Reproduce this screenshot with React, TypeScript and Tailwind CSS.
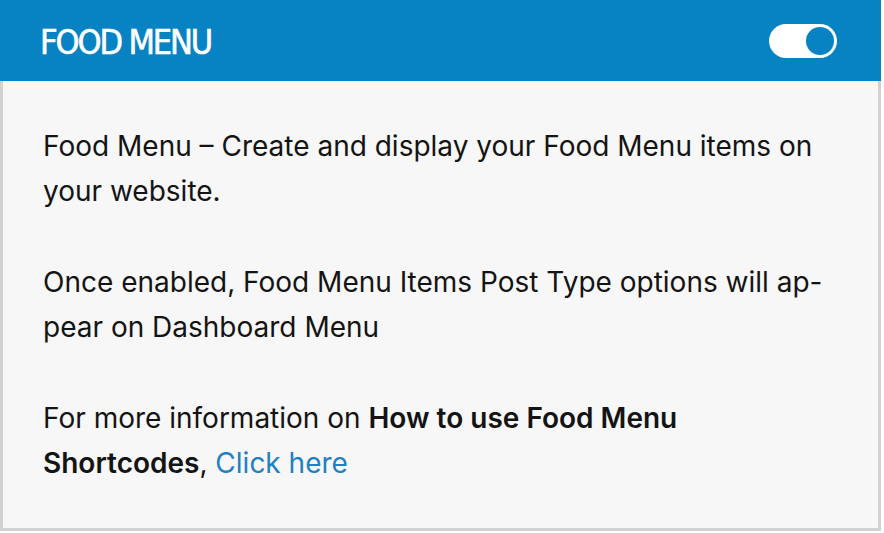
export default function App() {
  return (
    <div className="w-[884px] h-[533px] bg-white">
      <div className="w-[881px] h-[531px] flex flex-col border-l-[3px] border-r-[3px] border-b-[3px] border-[#d2d2d2] bg-[#f7f7f7]">
        <div className="h-[81px] shrink-0 -mx-[3px] bg-[#0783c4] flex items-center justify-between pl-[40px] pr-[44px]">
          <div
            className="text-white text-[34px] tracking-[-2.1px] leading-none pt-[2px] [-webkit-text-stroke:0.6px_white]"
            style={{ fontFamily: '"DejaVu Sans Condensed", "DejaVu Sans", sans-serif' }}
          >
            FOOD MENU
          </div>
          <div className="w-[68px] h-[34px] rounded-full bg-white flex items-center justify-end pr-[3px]">
            <div className="w-[28px] h-[28px] rounded-full bg-[#0783c4]" />
          </div>
        </div>
        <div
          className="pl-[40px] pt-[43px] text-[28px] leading-[45px] text-[#141414] flex flex-col gap-[46px]"
          style={{ fontFamily: 'Inter, "Noto Sans", sans-serif' }}
        >
          <p>
            Food Menu – Create and display your Food Menu items on
            <br />
            your website.
          </p>
          <p>
            Once enabled, Food Menu Items Post Type options will ap-
            <br />
            pear on Dashboard Menu
          </p>
          <p>
            For more information on <b className="font-semibold">How to use Food Menu</b>
            <br />
            <b className="font-semibold">Shortcodes</b>, <a className="text-[#1f80c2]">Click here</a>
          </p>
        </div>
      </div>
    </div>
  );
}
